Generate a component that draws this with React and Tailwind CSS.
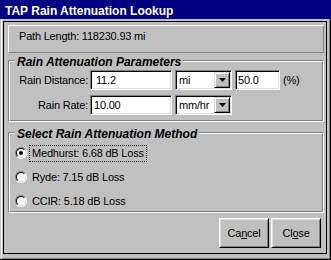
import React from "react";

function Sunken({ className = "", children }) {
  return (
    <div
      className={
        "border border-t-[#808080] border-l-[#808080] border-r-white border-b-white shadow-[inset_1px_1px_0_#000,inset_-1px_-1px_0_#dfdfdf] bg-white " +
        className
      }
    >
      {children}
    </div>
  );
}

function Select({ value }) {
  return (
    <Sunken className="w-[57px] h-[20px] p-[1px] flex">
      <div className="flex-1 overflow-hidden whitespace-nowrap pl-[2px] flex items-center leading-[13px]">
        {value}
      </div>
      <div className="w-[16px] h-[16px] bg-[#c0c0c0] border border-t-[#dfdfdf] border-l-[#dfdfdf] border-r-black border-b-black shadow-[inset_1px_1px_0_#fff,inset_-1px_-1px_0_#808080] flex items-center justify-center">
        <svg width="7" height="4" viewBox="0 0 7 4">
          <polygon points="0,0 7,0 3.5,4" fill="#000" />
        </svg>
      </div>
    </Sunken>
  );
}

function Group({ label, className = "", children }) {
  return (
    <div
      className={
        "relative border border-t-[#808080] border-l-[#808080] border-r-white border-b-white " +
        className
      }
    >
      <div className="h-full border border-t-white border-l-white border-r-[#808080] border-b-[#808080]">
        {children}
      </div>
      <div className="absolute left-[6px] top-[-6px] px-[2px] bg-[#c0c0c0] font-bold italic text-[12px] tracking-normal leading-[14px] whitespace-nowrap">
        {label}
      </div>
    </div>
  );
}

function Radio({ checked, focused, children }) {
  return (
    <div className="h-[18px] flex items-center">
      <div className="w-[12px] h-[12px] rounded-full border border-t-[#808080] border-l-[#808080] border-r-white border-b-white">
        <div className="w-full h-full rounded-full border border-t-black border-l-black border-r-[#dfdfdf] border-b-[#dfdfdf] bg-white flex items-center justify-center">
          {checked && <div className="w-[4px] h-[4px] rounded-full bg-black" />}
        </div>
      </div>
      <div
        className={
          "ml-[2px] h-[17px] px-[2px] flex items-center leading-[13px] border border-dotted " +
          (focused ? "border-black" : "border-transparent")
        }
      >
        {children}
      </div>
    </div>
  );
}

function Button({ children }) {
  return (
    <div className="w-[50px] h-[30px] bg-[#c0c0c0] border border-t-white border-l-white border-r-black border-b-black shadow-[inset_1px_1px_0_#dfdfdf,inset_-1px_-1px_0_#808080] flex items-center justify-center leading-[13px]">
      {children}
    </div>
  );
}

export default function App() {
  return (
    <div className="w-[331px] h-[260px] bg-[#c0c0c0] flex flex-col text-black text-[11px] tracking-[-0.2px] font-['Liberation_Sans',Arial,sans-serif] overflow-hidden">
      <div className="h-[19px] shrink-0 bg-[#000080] text-white font-bold text-[12px] tracking-normal leading-[14px] pt-[4px] pl-[5px] whitespace-nowrap">
        TAP Rain Attenuation Lookup
      </div>
      <div className="flex-1 flex flex-col border-r border-b border-black pl-[1px]">
        <div className="flex-1 flex flex-col border-l border-white border-r border-b border-r-[#808080] border-b-[#808080] pl-[1px] pr-[2px] pt-[2px] pb-[4px]">
          <div className="flex-1 flex flex-col border border-black pl-[4px] pr-[2px] pt-[3px]">
            <div className="h-[28px] shrink-0 border border-t-white border-l-white border-r-[#808080] border-b-[#808080] pl-[10px] pt-[4px] leading-[12px]">
              Path Length: 118230.93 mi
            </div>

            <Group label="Rain Attenuation Parameters" className="mt-[7px] h-[62px] shrink-0">
              <div className="pt-[8px] flex flex-col gap-[5px]">
                <div className="flex items-center h-[20px]">
                  <div className="w-[78px] text-right leading-[13px]">Rain Distance:</div>
                  <Sunken className="ml-[2px] w-[82px] h-[20px] pl-[5px] flex items-center leading-[13px]">
                    11.2
                  </Sunken>
                  <div className="ml-[3px]">
                    <Select value="mi" />
                  </div>
                  <Sunken className="ml-[3px] w-[45px] h-[20px] pl-[2px] flex items-center leading-[13px]">
                    50.0
                  </Sunken>
                  <div className="ml-[3px] leading-[13px]">(%)</div>
                </div>
                <div className="flex items-center h-[20px]">
                  <div className="w-[78px] text-right leading-[13px]">Rain Rate:</div>
                  <Sunken className="ml-[2px] w-[82px] h-[20px] pl-[3px] flex items-center leading-[13px]">
                    10.00
                  </Sunken>
                  <div className="ml-[3px]">
                    <Select value="mm/hr" />
                  </div>
                </div>
              </div>
            </Group>

            <Group label="Select Rain Attenuation Method" className="mt-[10px] h-[81px] shrink-0">
              <div className="pt-[10px] pl-[5px] flex flex-col gap-[6px]">
                <Radio checked focused>
                  Medhurst: 6.68 dB Loss
                </Radio>
                <Radio>Ryde: 7.15 dB Loss</Radio>
                <Radio>CCIR: 5.18 dB Loss</Radio>
              </div>
            </Group>

            <div className="mt-[5px] flex justify-end gap-[2px] pr-[3px]">
              <Button>
                Ca<span className="underline">n</span>cel
              </Button>
              <Button>
                Cl<span className="underline">o</span>se
              </Button>
            </div>
          </div>
        </div>
      </div>
    </div>
  );
}
